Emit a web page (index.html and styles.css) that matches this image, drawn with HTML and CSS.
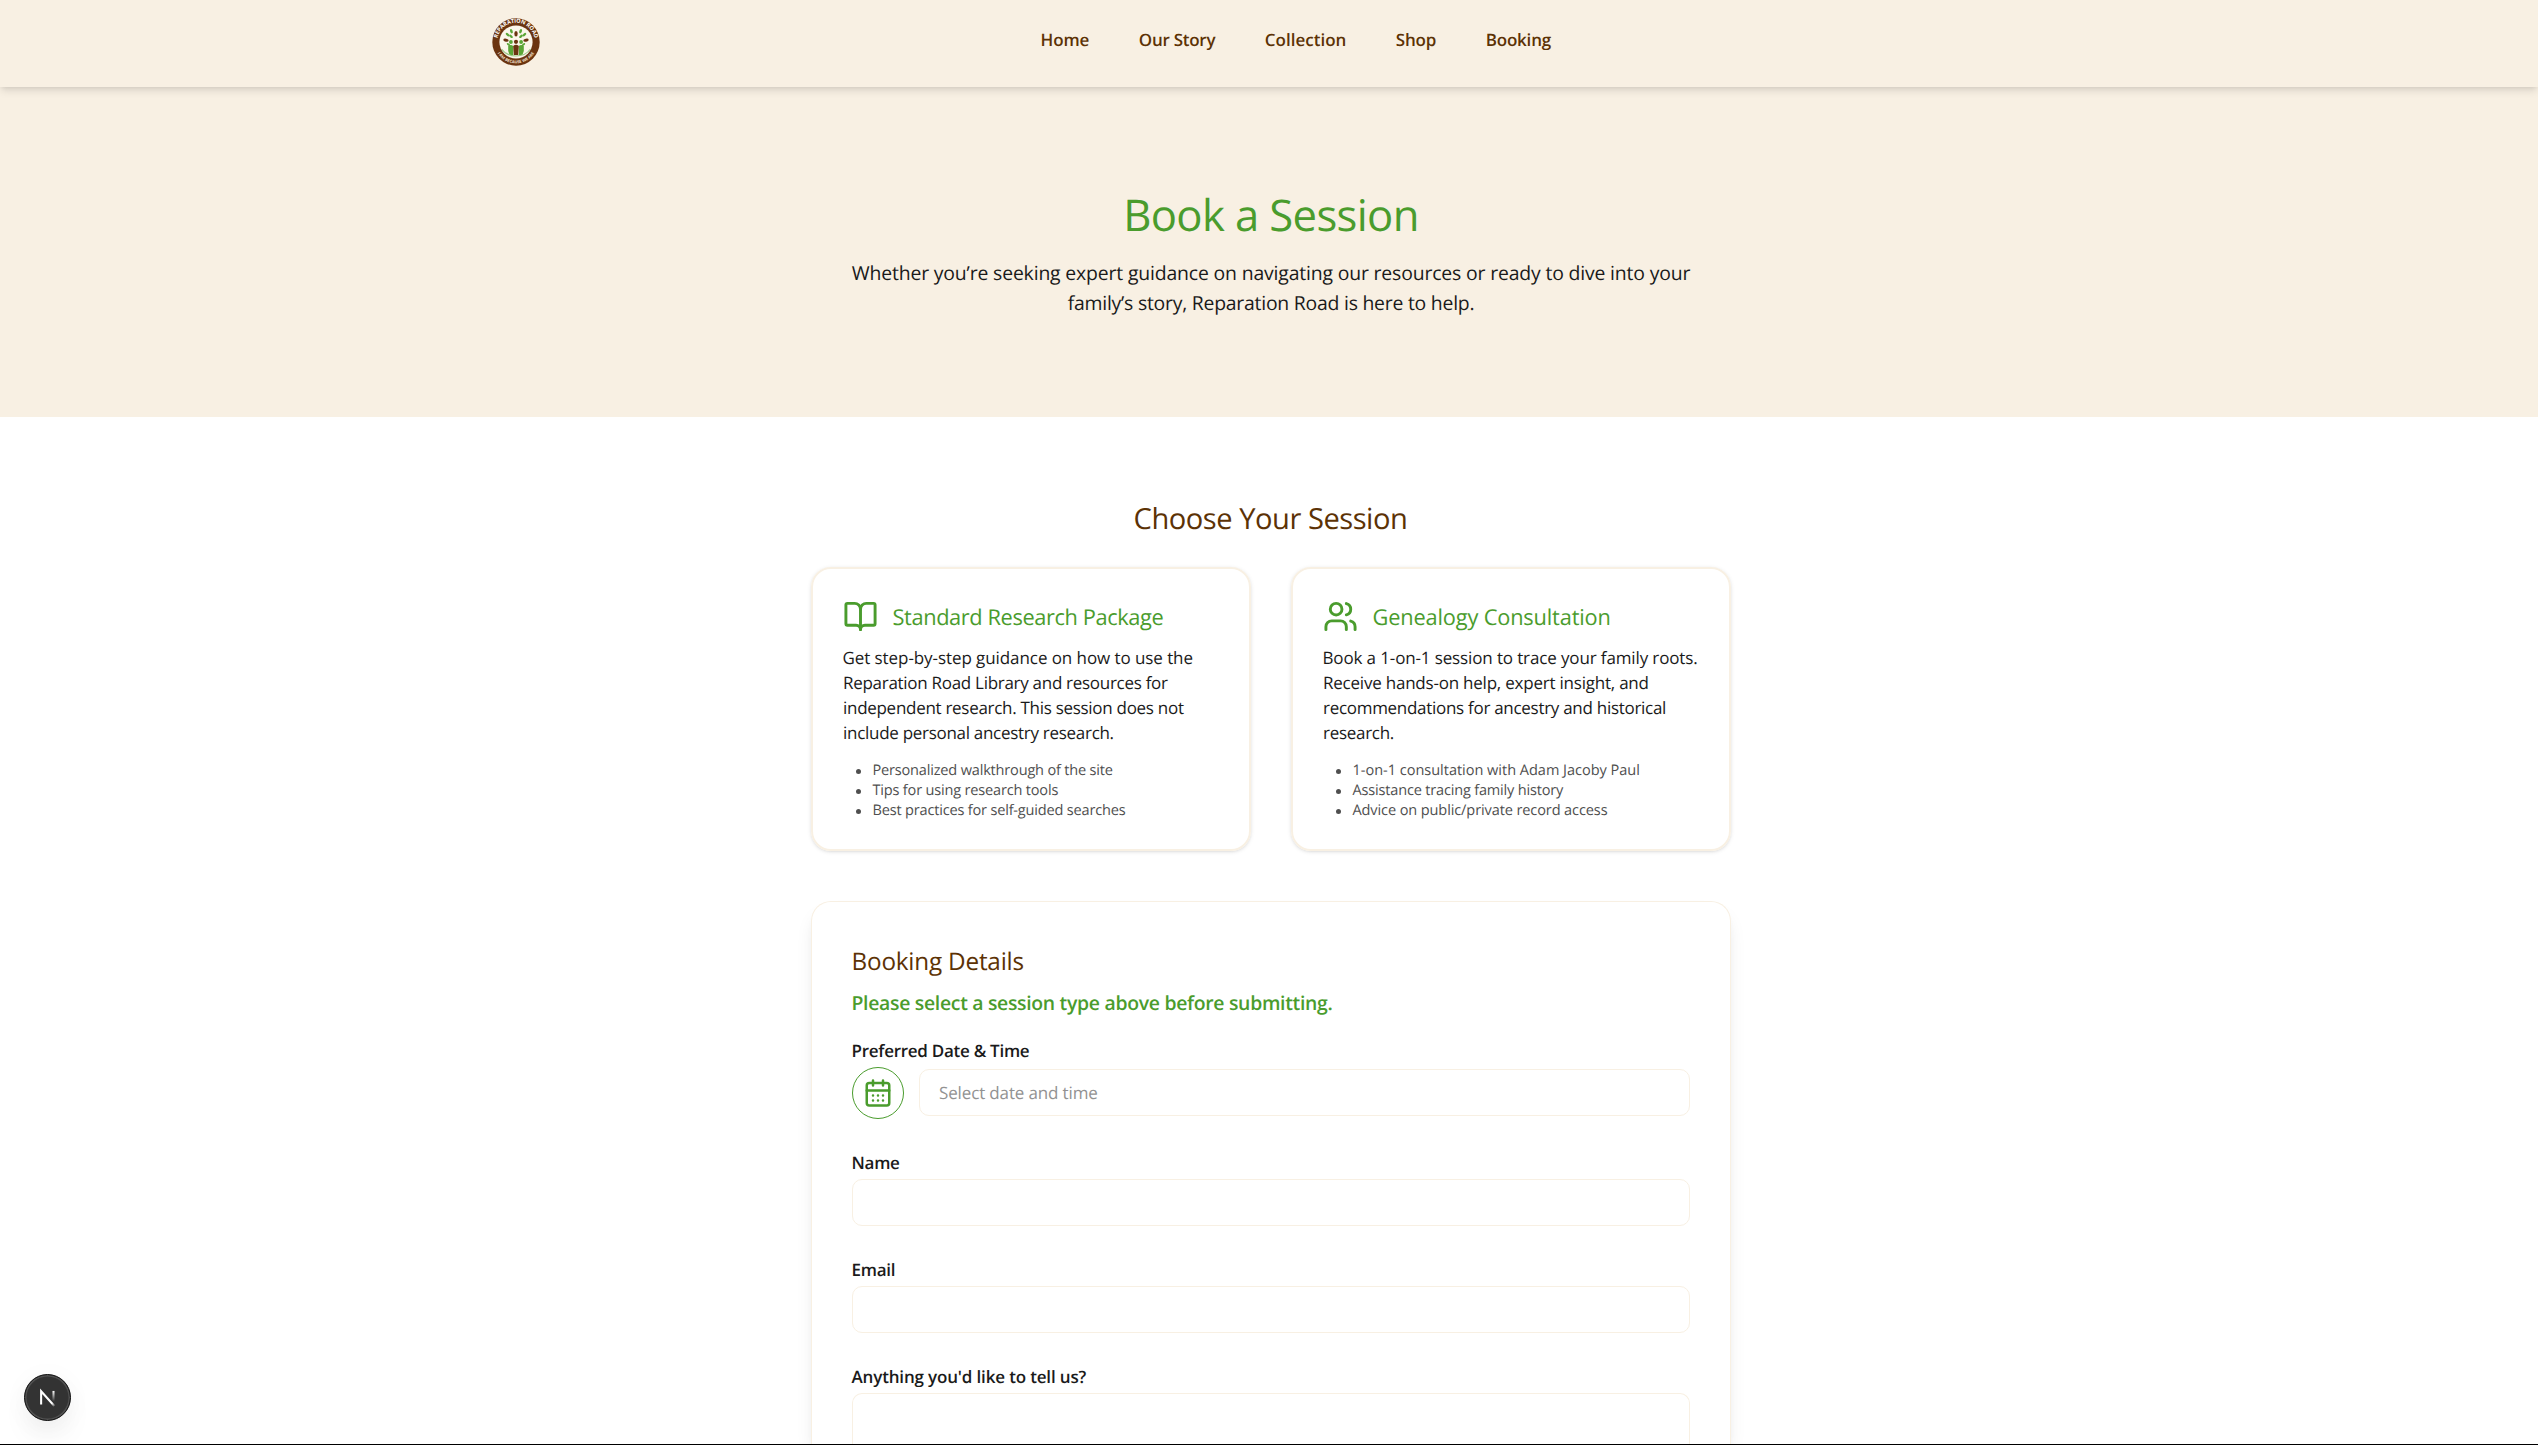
FILE: index.html
```
<!DOCTYPE html>
<html lang="en">
<head>
<meta charset="utf-8">
<title>Book a Session</title>
<link rel="stylesheet" href="styles.css">
</head>
<body>
<header class="header">
  <svg class="logo" viewBox="0 0 48 48">
    <defs>
      <path id="arc-top" d="M5.6 26 A18.6 18.6 0 1 1 42.4 26"/>
      <path id="arc-bottom" d="M3.2 30 A21.8 21.8 0 0 0 44.8 30"/>
    </defs>
    <circle cx="24" cy="24" r="23.7" fill="#6b3410"/>
    <circle cx="24" cy="24" r="16.6" fill="#fbf6ea"/>
    <text class="logo-top"><textPath href="#arc-top" startOffset="50%" text-anchor="middle">REPARATION ROAD</textPath></text>
    <text class="logo-bottom"><textPath href="#arc-bottom" startOffset="50%" text-anchor="middle">I AM BECAUSE WE ARE</textPath></text>
    <g fill="#5aa636">
      <ellipse cx="19.4" cy="13.2" rx="1.3" ry="2.3" transform="rotate(-20 19.4 13.2)"/>
      <ellipse cx="28.6" cy="13.2" rx="1.3" ry="2.3" transform="rotate(20 28.6 13.2)"/>
      <ellipse cx="15.6" cy="16.6" rx="1.2" ry="2.2" transform="rotate(-50 15.6 16.6)"/>
      <ellipse cx="32.4" cy="16.6" rx="1.2" ry="2.2" transform="rotate(50 32.4 16.6)"/>
      <ellipse cx="19" cy="18.3" rx="1.2" ry="2.2" transform="rotate(-50 19 18.3)"/>
      <ellipse cx="29" cy="18.3" rx="1.2" ry="2.2" transform="rotate(50 29 18.3)"/>
      <ellipse cx="16.5" cy="26.6" rx="1" ry="2" transform="rotate(-50 16.5 26.6)"/>
      <ellipse cx="31.5" cy="26.6" rx="1" ry="2" transform="rotate(50 31.5 26.6)"/>
      <circle cx="18.9" cy="24" r="1.9"/><circle cx="29.1" cy="24" r="1.9"/>
      <path d="M16.2 28q2.7-2.2 5 0v9h-3.6l-1.4-4zM31.8 28q-2.7-2.2-5 0v9h3.6l1.4-4z"/>
      <path d="M9.5 31q5 7 14.5 7t14.5-7" fill="none" stroke="#9cc786" stroke-width="1.2"/>
    </g>
    <g fill="#6b3410">
      <ellipse cx="24" cy="15.8" rx="1.7" ry="2.7"/>
      <ellipse cx="14" cy="22.2" rx="2.7" ry="1.5" transform="rotate(10 14 22.2)"/>
      <ellipse cx="34" cy="22.2" rx="2.7" ry="1.5" transform="rotate(-10 34 22.2)"/>
      <circle cx="24" cy="23.8" r="2.1"/>
      <path d="M21.2 28q2.8-2.6 5.6 0l-.6 9h-4.4z"/>
    </g>
  </svg>
  <nav class="nav">
    <a class="nav-home">Home</a>
    <a class="nav-story">Our Story</a>
    <a class="nav-collection">Collection</a>
    <a class="nav-shop">Shop</a>
    <a class="nav-booking">Booking</a>
  </nav>
</header>

<section class="hero">
  <h1 class="hero-title">Book a Session</h1>
  <p class="hero-text"><span class="hero-line">Whether you’re seeking expert guidance on navigating our resources or ready to dive into your</span><br><span class="hero-line-last">family’s story, Reparation Road is here to help.</span></p>
</section>

<main class="main">
  <h2 class="section-title">Choose Your Session</h2>
  <div class="cards">
    <article class="card">
      <div class="card-head">
        <svg class="card-icon" viewBox="0 0 24 24"><path d="M12 7v14"/><path d="M3 18a1 1 0 0 1-1-1V4a1 1 0 0 1 1-1h5a4 4 0 0 1 4 4 4 4 0 0 1 4-4h5a1 1 0 0 1 1 1v13a1 1 0 0 1-1 1h-6a3 3 0 0 0-3 3 3 3 0 0 0-3-3z"/></svg>
        <h3 class="card-title title-research">Standard Research Package</h3>
      </div>
      <p class="card-text"><span class="tight-0">Get step-by-step guidance on how to use the</span><br>Reparation Road Library and resources for<br>independent research. This session does not<br>include personal ancestry research.</p>
      <ul class="card-list">
        <li>Personalized walkthrough of the site</li>
        <li>Tips for using research tools</li>
        <li>Best practices for self-guided searches</li>
      </ul>
    </article>
    <article class="card">
      <div class="card-head">
        <svg class="card-icon" viewBox="0 0 24 24"><path d="M16 21v-2a4 4 0 0 0-4-4H6a4 4 0 0 0-4 4v2"/><circle cx="9" cy="7" r="4"/><path d="M22 21v-2a4 4 0 0 0-3-3.87"/><path d="M16 3.13a4 4 0 0 1 0 7.75"/></svg>
        <h3 class="card-title title-genealogy">Genealogy Consultation</h3>
      </div>
      <p class="card-text"><span class="tight-1">Book a 1-on-1 session to trace your family roots.</span><br><span class="tight-2">Receive hands-on help, expert insight, and</span><br>recommendations for ancestry and historical<br>research.</p>
      <ul class="card-list">
        <li class="tight-0">1-on-1 consultation with Adam Jacoby Paul</li>
        <li>Assistance tracing family history</li>
        <li class="tight-1">Advice on public/private record access</li>
      </ul>
    </article>
  </div>

  <form class="form">
    <h2 class="form-title">Booking Details</h2>
    <p class="form-note">Please select a session type above before submitting.</p>
    <div class="fields">
      <div class="field">
        <label class="label">Preferred Date &amp; Time</label>
        <div class="date-row">
          <span class="date-button">
            <svg class="date-icon" viewBox="0 0 24 24"><rect x="3" y="4" width="18" height="18" rx="2"/><path d="M8 2v4M16 2v4M3 10h18M8 14h.01M12 14h.01M16 14h.01M8 18h.01M12 18h.01M16 18h.01"/></svg>
          </span>
          <div class="input date-input">Select date and time</div>
        </div>
      </div>
      <div class="field">
        <label class="label">Name</label>
        <div class="input"></div>
      </div>
      <div class="field">
        <label class="label">Email</label>
        <div class="input"></div>
      </div>
      <div class="field">
        <label class="label label-message">Anything you'd like to tell us?</label>
        <div class="input message"></div>
      </div>
    </div>
  </form>
</main>

<div class="dev-badge">
  <svg class="dev-icon" viewBox="0 0 48 48">
    <defs>
      <linearGradient id="fade-diagonal" gradientUnits="userSpaceOnUse" x1="24" y1="24" x2="32" y2="34"><stop offset="0" stop-color="#fff"/><stop offset=".6" stop-color="#fff"/><stop offset="1" stop-color="#fff" stop-opacity="0"/></linearGradient>
      <linearGradient id="fade-stem" gradientUnits="userSpaceOnUse" x1="0" y1="17" x2="0" y2="28"><stop offset="0" stop-color="#fff"/><stop offset="1" stop-color="#fff" stop-opacity="0"/></linearGradient>
    </defs>
    <path d="M17.2 31.5V17.3L31.3 33" fill="none" stroke="url(#fade-diagonal)" stroke-width="2.2"/>
    <path d="M30.400 17v11" fill="none" stroke="url(#fade-stem)" stroke-width="2.200"/>
  </svg>
</div>
<div class="bottom-edge"></div>
</body>
</html>
```
FILE: styles.css
```
* { box-sizing: border-box; margin: 0; padding: 0; }

html, body { height: 1445px; overflow: hidden; }

body {
  font-family: "Open Sans", "Noto Sans", sans-serif;
  font-size: 17px;
  color: #1a1a1a;
  background: #fff;
  text-rendering: geometricPrecision;
}

h1, h2, h3 { font-weight: 400; }

.header {
  position: relative;
  z-index: 2;
  display: flex;
  align-items: flex-start;
  height: 87px;
  padding-left: 492px;
  background: #f8f0e3;
  box-shadow: 0 5px 8px -1px rgba(0, 0, 0, .1), 0 2px 5px -2px rgba(0, 0, 0, .1);
}

.logo { width: 48px; height: 48px; margin-top: 18px; }
.logo-top { font: 700 5.6px "Open Sans", sans-serif; letter-spacing: -.1px; fill: #fff; }
.logo-bottom { font: 700 4px "Open Sans", sans-serif; fill: #f3e3d0; }

.nav {
  display: flex;
  gap: 49.5px;
  margin-left: 500.5px;
  line-height: 79px;
  font-weight: 600;
  color: #5c3205;
}
.nav-home { letter-spacing: -.006em; }
.nav-story { letter-spacing: -.015em; }
.nav-shop, .nav-booking { letter-spacing: -.011em; }

.hero {
  height: 330px;
  padding: 102px 0 0 4px;
  text-align: center;
  background: #f8f0e3;
}
.hero-title {
  font-size: 43.65px;
  line-height: 50px;
  letter-spacing: -.0145em;
  color: #4a9c2d;
}
.hero-text {
  margin-top: 19px;
  font-size: 19.4px;
  line-height: 30px;
}
.hero-line { letter-spacing: -.0082em; }
.hero-line-last { letter-spacing: -.012em; }

.main {
  width: 920px;
  margin: 0 0 0 811px;
  padding-top: 81px;
}
.section-title {
  font-size: 29.1px;
  line-height: 40px;
  letter-spacing: -.016em;
  text-indent: -1px;
  text-align: center;
  color: #5c3205;
}

.cards {
  display: grid;
  grid-template-columns: 1fr 1fr;
  gap: 40px;
  margin-top: 29px;
}
.card {
  height: 284px;
  padding: 30px;
  border: 2px solid #f8f0e3;
  border-radius: 20px;
  box-shadow: 0 1px 4px rgba(0, 0, 0, .1), 0 1px 3px -1px rgba(0, 0, 0, .1);
}
.card-head { display: flex; align-items: center; gap: 14.5px; height: 35px; }
.card-icon {
  width: 35px;
  height: 35px;
  fill: none;
  stroke: #4a9c2d;
  stroke-width: 2;
  stroke-linecap: round;
  stroke-linejoin: round;
}
.card-title { padding-top: 2px; font-size: 21.82px; line-height: 35px; color: #4a9c2d; white-space: nowrap; }
.title-research { letter-spacing: -.0184em; }
.title-genealogy { letter-spacing: -.0081em; }
.card-text {
  margin-top: 11px;
  line-height: 25px;
  letter-spacing: -.017em;
  text-indent: -.5px;
  white-space: nowrap;
}
.card-list {
  margin-top: 15px;
  list-style: none;
  font-size: 14.55px;
  line-height: 20px;
  letter-spacing: -.0127em;
  color: #4f4f4f;
}
.card-list li { display: flex; align-items: center; white-space: nowrap; }
.card-list li::before {
  content: "";
  width: 5px;
  height: 5px;
  margin: 2px 11.5px 0 13px;
  border-radius: 50%;
  background: #4f4f4f;
}
.card-text .tight-0 { letter-spacing: -.0045em; }
.card-list .tight-0 { letter-spacing: -.002em; }
.tight-1 { letter-spacing: -.0078em; }
.tight-2 { letter-spacing: -.013em; }

.form {
  height: 543px;
  margin-top: 50px;
  padding: 40px 40px 0;
  border: 1px solid #f8f0e3;
  border-bottom: 0;
  border-radius: 20px 20px 0 0;
  box-shadow: 0 12px 19px -4px rgba(0, 0, 0, .1), 0 5px 8px -5px rgba(0, 0, 0, .1);
}
.form-title { padding-top: 1px; font-size: 24.25px; line-height: 37px; letter-spacing: -.0077em; text-indent: -.5px; color: #5c3205; }
.form-note {
  margin-top: 8px;
  font-size: 19.4px;
  font-weight: 600;
  line-height: 30px;
  letter-spacing: -.0154em;
  text-indent: -.5px;
  color: #4a9c2d;
}
.fields { display: flex; flex-direction: column; gap: 31px; margin-top: 20px; }
.field { display: flex; flex-direction: column; gap: 4px; }
.label { font-weight: 600; line-height: 25px; letter-spacing: -.0161em; text-indent: -.5px; }
.label-message { letter-spacing: -.0095em; }
.input {
  height: 47px;
  border: 1px solid #f8f0e3;
  border-radius: 10px;
}
.message { height: 51px; border-bottom: 0; border-radius: 10px 10px 0 0; }
.date-row { display: flex; gap: 15px; }
.date-button {
  display: flex;
  align-items: center;
  justify-content: center;
  width: 52px;
  height: 52px;
  border: 1px solid #4a9c2d;
  border-radius: 50%;
}
.date-icon {
  width: 30px;
  height: 30px;
  fill: none;
  stroke: #4a9c2d;
  stroke-width: 2;
  stroke-linecap: round;
  stroke-linejoin: round;
}
.date-input {
  flex: 1;
  margin-top: 2px;
  padding-left: 19px;
  line-height: 46px;
  letter-spacing: -.0083em;
  color: #929292;
}

.dev-badge {
  position: absolute;
  left: 24px;
  top: 1374px;
  width: 47px;
  height: 47px;
  border-radius: 50%;
  background: #333;
  border: 1px solid #111;
  box-shadow: inset 0 0 0 1.5px #505050, 0 16px 32px -8px rgba(0, 0, 0, .1), 0 4px 28px rgba(0, 0, 0, .04);
}
.dev-icon { display: block; width: 45px; height: 45px; }

.bottom-edge {
  position: absolute;
  left: 0;
  right: 0;
  top: 1444px;
  height: 1px;
  background: #000;
}
```
